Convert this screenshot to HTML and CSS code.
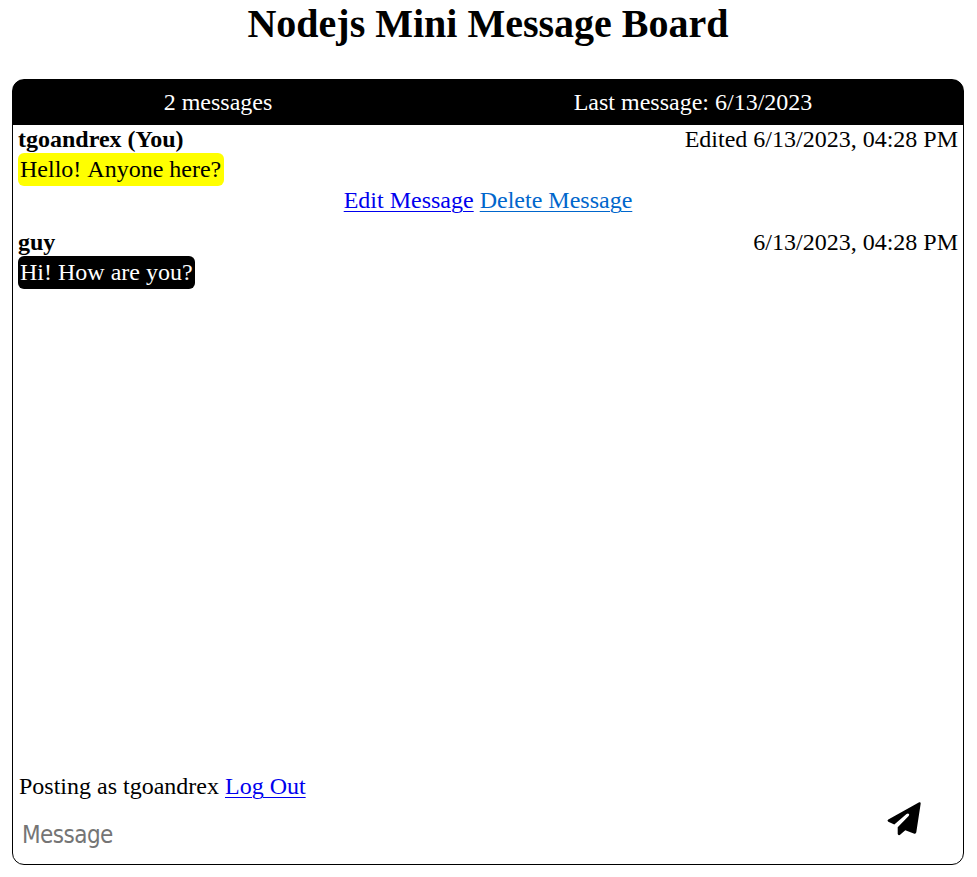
FILE: index.html
```html
<!DOCTYPE html>
<html lang="en">
<head>
<meta charset="utf-8">
<title>Nodejs Mini Message Board</title>
<link rel="stylesheet" href="styles.css">
</head>
<body>
<h1>Nodejs Mini Message Board</h1>
<main class="board">
  <header class="summary"><span>2 messages</span><span>Last message: 6/13/2023</span></header>
  <section class="messages">
    <article class="message">
      <div class="meta"><strong>tgoandrex (You)</strong><span>Edited 6/13/2023, 04:28 PM</span></div>
      <p class="bubble own">Hello! Anyone here?</p>
      <div class="actions"><a href="#">Edit Message</a> <a href="#" class="delete">Delete Message</a></div>
    </article>
    <article class="message">
      <div class="meta"><strong>guy</strong><span>6/13/2023, 04:28 PM</span></div>
      <p class="bubble">Hi! How are you?</p>
    </article>
  </section>
  <form class="composer">
    <div class="fields">
      <p class="user">Posting as tgoandrex <a href="#">Log Out</a></p>
      <input type="text" placeholder="Message">
    </div>
    <button type="button" aria-label="Send"><svg viewBox="0 0 34 34"><path d="M32.200 .3 L1.300 17.500 Q-.2 18.600 1.300 19.700 L7.300 22.600 L19.500 12.100 Q21 11 21.900 12 Q22.600 12.900 21.400 14.200 L10.700 25.300 V32 Q11.100 33.600 12.800 33 L18.300 28.300 L27.400 31.700 Q29 32 29.300 30.300 L33.700 1.600 Q33.700 -.2 32.200 .3Z"/></svg></button>
  </form>
</main>
</body>
</html>
```
FILE: styles.css
```css
* { box-sizing: border-box; }
body { margin: 0; background: #fff; color: #000; font: 24px/28px "Liberation Serif", "Times New Roman", serif; }
h1 { width: 976px; margin: 0; padding-top: 1px; font-size: 40px; line-height: 46px; text-align: center; }
.board { display: flex; flex-direction: column; width: 952px; height: 786px; margin: 32px 0 0 12px; border: 1px solid #000; border-radius: 12px; background: linear-gradient(#000 45px, #fff 45px); overflow: hidden; }
.summary { display: flex; justify-content: space-around; height: 45px; padding-top: 8px; background: #000; color: #fff; }
.messages { flex: 1; padding: 0 5px; }
.message { height: 103px; }
.meta { display: flex; justify-content: space-between; }
.bubble { width: fit-content; margin: 0; padding: 2px 2px 3px; border-radius: 6px; background: #000; color: #fff; }
.own { padding-right: 3px; background: #ff0; color: #000; font-kerning: none; }
.actions { text-align: center; }
a { color: #00e; text-decoration-thickness: 1px; text-underline-offset: 3px; }
.delete { color: #06c; }
.composer { display: flex; height: 92px; }
.fields { flex: 1; padding-left: 6px; }
.user { margin: 0; }
input { display: block; width: 800px; height: 32px; margin: 19px 0 0; padding: 0 3px; border: 0; outline: 0; background: transparent; font: 24px/28px "DejaVu Sans Condensed", "DejaVu Sans", sans-serif; font-stretch: condensed; letter-spacing: -.55px; }
input::placeholder { color: #757575; opacity: 1; }
button { width: 34px; height: 34px; margin: 30px 42px 0 0; padding: 0; border: 0; background: transparent; }
button svg { display: block; width: 34px; height: 34px; }
```
